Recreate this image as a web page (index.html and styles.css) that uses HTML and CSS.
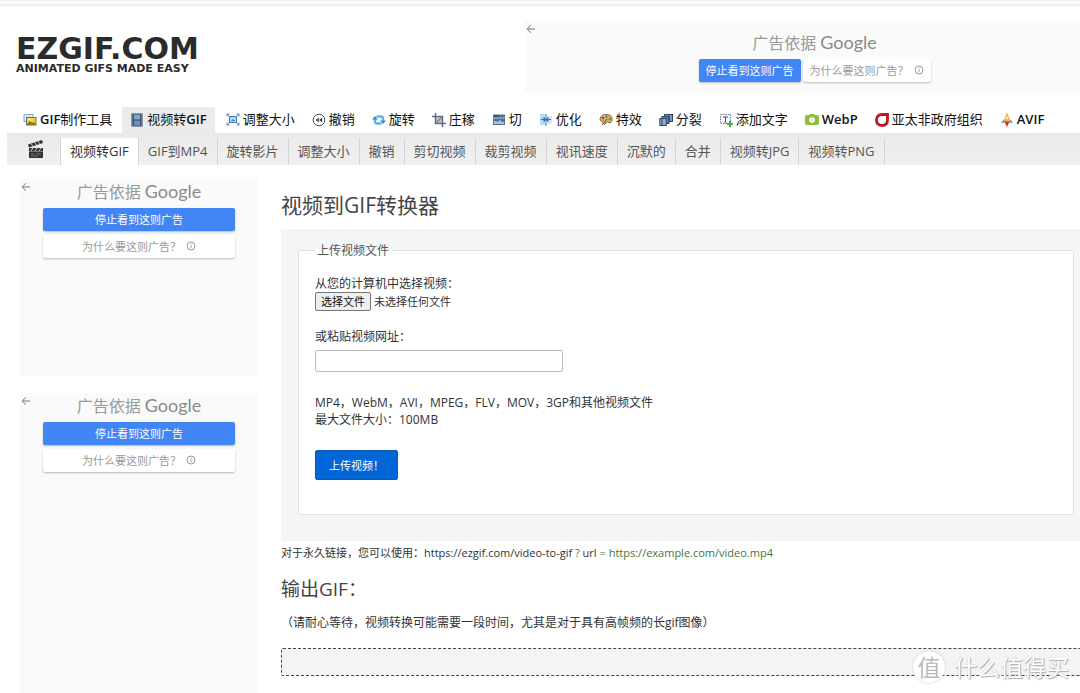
FILE: index.html
```html
<!DOCTYPE html>
<html lang="zh-CN">
<head>
<meta charset="utf-8">
<title>视频到GIF转换器</title>
<link rel="stylesheet" href="styles.css">
</head>
<body>
<div class="strip"></div>
<header class="header">
  <a class="logo" href="#"><span class="logo-name">EZGIF.COM</span><span class="logo-tag">ANIMATED GIFS MADE EASY</span></a>
  <aside class="ad ad-banner">
    <svg class="ad-back" viewBox="0 0 10 10"><path d="M9 5H1.5M5 1.2L1.2 5L5 8.8"/></svg>
    <p class="ad-title">广告依据 <span class="google">Google</span></p>
    <div class="ad-actions">
      <button class="ad-stop">停止看到这则广告</button>
      <button class="ad-why">为什么要这则广告？<svg class="info" viewBox="0 0 10 10"><circle cx="5" cy="5" r="4"/><path d="M5 4.3v3M5 2.5v1"/></svg></button>
    </div>
  </aside>
</header>

<nav class="nav">
  <a href="#"><svg viewBox="0 0 14 14"><rect x="1" y="1.500" width="9" height="7" fill="#dce9f5" stroke="#8ba9c9"/><rect x="3.500" y="4.500" width="9.500" height="7.500" fill="#f5d13c" stroke="#55748f"/><path d="M4 11l3-3 2 2 1.500-1 2 2v1H4z" fill="#8a711c"/><circle cx="6.500" cy="6.500" r="1" fill="#fff"/></svg><span><b>GIF</b>制作工具</span></a>
  <a href="#" class="active"><svg viewBox="0 0 14 14"><rect x="1.500" y=".5" width="11" height="13" fill="#33475f"/><rect x="4" y="1.500" width="6" height="5" fill="#7fa4d6"/><rect x="4" y="7.500" width="6" height="5" fill="#6791cb"/><path d="M2.700 1.500v11M11.300 1.500v11" stroke="#cfd9e6" stroke-dasharray="1 1.500"/></svg><span>视频转<b>GIF</b></span></a>
  <a href="#"><svg viewBox="0 0 14 14"><rect x="3.500" y="3.500" width="7" height="6" fill="#b9d6f2" stroke="#3f76b5"/><path d="M1 3.500V1h2.500M10.500 1H13v2.500M13 9.500V12h-2.500M3.500 12H1V9.500M1 1l2.500 2.500M13 1l-2.500 2.500M1 12l2.500-2.500M13 12l-2.500-2.500" fill="none" stroke="#4f86c2"/><path d="M5 8l2-2 2 2z" fill="#3f76b5"/></svg><span>调整大小</span></a>
  <a href="#"><svg viewBox="0 0 14 14"><circle cx="7" cy="7" r="5.800" fill="#fff" stroke="#555"/><path d="M6.800 4.500v5L3.700 7zM10.200 4.500v5L7.200 7z" fill="#444"/></svg><span>撤销</span></a>
  <a href="#"><svg viewBox="0 0 14 14"><path d="M4.500 3.500H9q2 0 2 2V8M9.500 10.500H5q-2 0-2-2V6" fill="none" stroke="#67b1e0" stroke-width="2.400"/><path d="M8 7.500h6L11 11zM0 6.500h6L3 3z" fill="#3d8fca"/></svg><span>旋转</span></a>
  <a href="#"><svg viewBox="0 0 14 14"><rect x="3" y="3" width="8" height="8" fill="#b9c8dc"/><path d="M3.500 0v10.500H14M0 3.500h10.500V14" fill="none" stroke="#5a6f8d" stroke-width="1.500"/><path d="M4.500 9.500l5-5" stroke="#c66b48" stroke-width="1.500"/></svg><span>庄稼</span></a>
  <a href="#"><svg viewBox="0 0 14 14"><rect x="1" y="1.500" width="12" height="10.500" fill="#55708f"/><path d="M1.500 5h11" stroke="#dfe8f2" stroke-dasharray="2 1"/><path d="M2 11V8h2l2 1 2-2 2 2h2v2z" fill="#a9c4e2"/><path d="M2 3h5" stroke="#263850"/></svg><span>切</span></a>
  <a href="#"><svg viewBox="0 0 14 14"><path d="M1 1h5v11H1z" fill="#b9dbf5"/><path d="M8 3h5v8H8z" fill="#d4e8f8"/><path d="M7 1v12" stroke="#4a76a8"/><path d="M2 6.500h3M5 4.500l2 2-2 2zM12 6.500H9M9 4.500l-2 2 2 2z" fill="#2879bd" stroke="#2879bd"/></svg><span>优化</span></a>
  <a href="#"><svg viewBox="0 0 14 14"><path d="M1 6Q2 1 8 1.500Q14 2 13 7.500Q12 11 10 9.500Q8 8 7 10Q5 13 4 10Q4 8 2 8Q1 8 1 6z" fill="#d8b06d" stroke="#85694a"/><circle cx="4" cy="5" r="1.200" fill="#c93e2d"/><circle cx="7.500" cy="3.800" r="1.200" fill="#4e8fcb"/><circle cx="10.800" cy="6" r="1.200" fill="#529f4b"/><path d="M3 12L8 6" stroke="#66513f"/></svg><span>特效</span></a>
  <a href="#"><svg viewBox="0 0 14 14"><rect x="5.500" y="1.500" width="8" height="7" fill="#7a99c2" stroke="#2f4869"/><rect x="3" y="3.500" width="7" height="7" fill="#5c7fae" stroke="#2f4869"/><rect x=".8" y="5.500" width="6.500" height="7" fill="#8eabd0" stroke="#2f4869"/><path d="M3 12.500V6M10 9V2" stroke="#2f4869"/></svg><span>分裂</span></a>
  <a href="#"><svg viewBox="0 0 14 14"><rect x="1.500" y="1.500" width="10" height="9" fill="#f8fafc" stroke="#66788c" stroke-dasharray="1.500 1"/><path d="M4 4h5M6.500 4v5M5.500 9h2" stroke="#3f4c5c"/><path d="M11 8v6M8 11h6" stroke="#4fae45" stroke-width="2"/></svg><span>添加文字</span></a>
  <a href="#"><svg viewBox="0 0 14 14"><path d="M2 2h2l1-1h4l1 1h2q2 0 2 2v6q0 2-2 2H2q-2 0-2-2V4q0-2 2-2z" fill="#8fbd3c"/><circle cx="7" cy="7" r="2.800" fill="#fff"/><circle cx="7" cy="7" r="1.200" fill="#d9ebb8"/></svg><span><b>WebP</b></span></a>
  <a href="#"><svg viewBox="0 0 14 14"><path d="M12.500 1.500v5.500Q12.500 12.500 7 12.500T1.500 7Q1.500 1.500 7 1.500z" fill="#fff" stroke="#bd1722" stroke-width="2.800"/><path d="M6 8.500Q5.500 5 9 5Q9.500 8 6 8.500" fill="#fff"/></svg><span>亚太非政府组织</span></a>
  <a href="#"><svg viewBox="0 0 14 14"><path d="M7 0Q10 4 9.500 10h-5Q4 4 7 0z" fill="#f0b34a"/><path d="M4.500 6L1 10l3.500-.5zM9.500 6L13 10l-3.500-.5z" fill="#777789"/><path d="M4.500 8.500h5L7 14z" fill="#ca3038"/><circle cx="7" cy="5" r="1.300" fill="#fff0bd"/></svg><span><b>AVIF</b></span></a>
</nav>
<nav class="subnav">
  <a href="#" class="clap" aria-label="视频"><svg viewBox="0 0 16 18"><path d="M1 8h14v10H1z" fill="#333"/><path d="M0 4.500L14 0l1 3L1 7.500z" fill="#333"/><path d="M3 3.500l2 2.800M6.500 2.300l2 2.800M10 1.200l2 2.800M3 11l2-3M7 11l2-3M11 11l2-3" stroke="#ccc"/><path d="M1 11.500h14M3 14h3M8 14h5M3 16h7" stroke="#777"/></svg></a>
  <a href="#" class="current">视频转GIF</a><a href="#">GIF到MP4</a><a href="#">旋转影片</a><a href="#">调整大小</a><a href="#">撤销</a><a href="#">剪切视频</a><a href="#">裁剪视频</a><a href="#">视讯速度</a><a href="#">沉默的</a><a href="#">合并</a><a href="#">视频转JPG</a><a href="#">视频转PNG</a>
</nav>

<div class="columns">
  <div class="sidebar">
    <aside class="ad ad-box">
      <svg class="ad-back" viewBox="0 0 10 10"><path d="M9 5H1.500M5 1.200L1.200 5L5 8.800"/></svg>
      <p class="ad-title">广告依据 <span class="google">Google</span></p>
      <div class="ad-actions">
        <button class="ad-stop">停止看到这则广告</button>
        <button class="ad-why">为什么要这则广告？<svg class="info" viewBox="0 0 10 10"><circle cx="5" cy="5" r="4"/><path d="M5 4.300v3M5 2.500v1"/></svg></button>
      </div>
    </aside>
    <aside class="ad ad-box ad-tall">
      <svg class="ad-back" viewBox="0 0 10 10"><path d="M9 5H1.500M5 1.200L1.200 5L5 8.800"/></svg>
      <p class="ad-title">广告依据 <span class="google">Google</span></p>
      <div class="ad-actions">
        <button class="ad-stop">停止看到这则广告</button>
        <button class="ad-why">为什么要这则广告？<svg class="info" viewBox="0 0 10 10"><circle cx="5" cy="5" r="4"/><path d="M5 4.300v3M5 2.500v1"/></svg></button>
      </div>
    </aside>
  </div>
  <main class="main">
    <h1>视频到GIF转换器</h1>
    <form class="panel">
      <fieldset>
        <legend>上传视频文件</legend>
        <label for="file">从您的计算机中选择视频：</label>
        <div class="file-row">
          <input id="file" type="file" hidden>
          <button type="button" class="choose" onclick="document.getElementById('file').click()">选择文件</button>
          <span>未选择任何文件</span>
        </div>
        <label for="url">或粘贴视频网址：</label>
        <input id="url" class="url" type="text">
        <p class="formats">MP4，WebM，AVI，MPEG，FLV，MOV，3GP和其他视频文件<br>最大文件大小：100MB</p>
        <button type="submit" class="upload">上传视频！</button>
      </fieldset>
    </form>
    <p class="permalink">对于永久链接，您可以使用：https://ezgif.com/video-to-gif <span class="mark">?</span> url <span class="mark">= https://example.com/video.mp4</span></p>
    <h2>输出GIF：</h2>
    <p class="note">（请耐心等待，视频转换可能需要一段时间，尤其是对于具有高帧频的长gif图像）</p>
    <div class="output"></div>
  </main>
</div>
<div class="watermark"><span class="seal">值</span><span>什么值得买</span></div>
</body>
</html>
```
FILE: styles.css
```css
* { box-sizing: border-box; }
body {
  margin: 0;
  position: relative;
  overflow-x: hidden;
  background: #fff;
  color: #333;
  font: 12px/17px "Open Sans", "Noto Sans CJK SC", sans-serif;
}
p, h1, h2 { margin: 0; }
a { color: inherit; text-decoration: none; }
button, input { font: inherit; }
button { cursor: pointer; }

.strip {
  height: 6px;
  border-bottom: 1px solid #e9e9e9;
  background: repeating-linear-gradient(90deg, #f3f3f3 0 1px, transparent 1px 4px),
    repeating-linear-gradient(#f3f3f3 0 1px, #fcfcfc 1px 4px);
}
.header { display: flex; justify-content: space-between; padding: 15px 0 14px 16px; }
.logo {
  display: flex;
  flex-direction: column;
  padding-top: 14px;
  color: #2b2b2b;
  font-family: "DejaVu Sans", sans-serif;
  font-weight: 700;
  white-space: nowrap;
}
.logo-name { font-size: 30px; line-height: 28px; }
.logo-tag { font-size: 11px; line-height: 12px; }

.ad { position: relative; background: #fafafa; color: #999; }
.ad-banner { width: 555px; height: 72px; padding: 11px 0 0 24px; }
.ad-back { position: absolute; left: 1px; top: 3px; width: 10px; height: 10px; fill: none; stroke: #777; }
.ad-title { text-align: center; font-size: 16px; line-height: 20px; }
.google { font-family: Lato, sans-serif; font-size: 18px; color: #8a8a8a; }
.ad-actions { display: flex; justify-content: center; gap: 2px; margin-top: 6px; }
.ad-actions button {
  display: flex;
  align-items: center;
  justify-content: center;
  height: 23px;
  padding: 0 7px 1px;
  border: 0;
  border-radius: 2px;
  font-size: 11px;
  white-space: nowrap;
  box-shadow: 0 1px 2px #0004;
}
.ad-actions .ad-stop { background: #4285f4; color: #fff; }
.ad-actions .ad-why { background: #fff; color: #999; }
.info { width: 10px; height: 10px; margin-left: 5px; fill: none; stroke: #999; }
.ad-box { height: 197px; padding: 2px 23px 0; }
.ad-box .ad-actions { flex-direction: column; gap: 4px; }
.ad-tall { height: 300px; }

.nav { display: flex; gap: 4px; padding-left: 16px; font-size: 13px; color: #111; white-space: nowrap; }
.nav a { display: flex; align-items: center; gap: 3px; height: 26px; padding: 0 6px 1px 7px; }
.nav svg { width: 14px; height: 14px; flex: none; }
.nav b { font-weight: 600; }
.nav .active { padding: 0 8px 1px; background: #ebebeb; }

.subnav {
  display: flex;
  height: 32px;
  margin-left: 7px;
  padding-top: 5px;
  background: linear-gradient(#e9e9e9, #f1f1f1);
  font-size: 13px;
  line-height: 27px;
  color: #555;
  white-space: nowrap;
}
.subnav a { padding: 0 9px; border-right: 1px solid #d4d4d4; }
.subnav .current { background: #fff; color: #333; }
.subnav .clap { width: 54px; padding: 2px 0 0 21px; line-height: 0; }
.clap svg { width: 16px; height: 18px; }

.columns { display: flex; gap: 23px; padding-left: 20px; }
.sidebar { flex: none; display: flex; flex-direction: column; gap: 17px; width: 238px; padding-top: 14px; }
.main { flex: 1; min-width: 0; }
h1 { padding: 26px 0 10px; font-size: 21px; line-height: 28px; font-weight: 400; color: #444; }
.panel { padding: 13px 6px 26px 17px; background: #f3f5f7; }
fieldset {
  margin: 0;
  padding: 16px 17px 34px 16px;
  border: 1px solid #dfe2e5;
  border-radius: 2px;
  background: #fff;
}
legend { padding: 0 2px; color: #555; }
label { display: block; }
.file-row { display: flex; align-items: center; gap: 3px; margin-bottom: 17px; font-size: 11px; height: 19px; }
.choose {
  height: 19px;
  padding: 0 5px;
  border: 1px solid #767676;
  border-radius: 2px;
  background: #efefef;
  color: #111;
  line-height: 16px;
}
.url { display: block; width: 248px; height: 22px; margin-top: 5px; border: 1px solid #bbb; border-radius: 2px; background: #fff; }
.formats { margin: 22px 0; }
.upload {
  display: block;
  height: 30px;
  padding: 0 13px;
  border: 1px solid #0a5bb5;
  border-radius: 2px;
  background: #0366d6;
  color: #fff;
  font-size: 11px;
}
.permalink { padding-top: 3px; font-size: 11px; }
.mark { color: #3c763d; }
h2 { padding: 15px 0 12px; font-size: 19px; line-height: 26px; font-weight: 400; color: #444; }
.note { padding: 0 0 17px; }
.output { height: 28px; border: 1px dashed #444; border-right: 0; border-radius: 2px 0 0 2px; background: #f4f4f4; }

.watermark {
  position: absolute;
  right: 11px;
  bottom: 10px;
  display: flex;
  align-items: center;
  gap: 9px;
  color: #fff;
  font-size: 23px;
  line-height: 32px;
  text-shadow: 1px 1px 1px #aaa, 0 0 1px #bbb;
}
.seal {
  width: 32px;
  height: 32px;
  border-radius: 50%;
  background: #fff;
  box-shadow: 0 0 2px #bbb;
  color: #bbb;
  text-align: center;
  text-shadow: none;
}
```
